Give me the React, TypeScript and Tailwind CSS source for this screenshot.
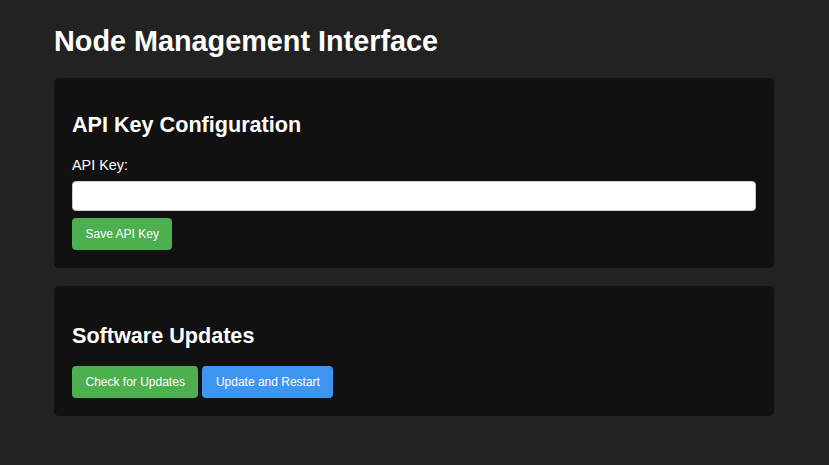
import React, { useState } from 'react';

const App: React.FC = () => {
  const [apiKey, setApiKey] = useState('');

  return (
    <div className="min-h-screen bg-[#222222] text-white font-['Liberation_Sans',Arial,sans-serif] text-[14.4px]">
      <div className="w-[720px] ml-[54px] pt-[25px] pb-[40px]">
        <h1 className="text-[28.8px] font-bold leading-[33px] mb-[20px]">Node Management Interface</h1>

        <div className="flex flex-col gap-[18px]">
          {/* API key card */}
          <section className="bg-[#111111] rounded-[5px] px-[18px] pb-[18px] pt-[34px]">
            <h2 className="text-[21.6px] font-bold leading-[25px] mb-[20px]">API Key Configuration</h2>
            <label htmlFor="apiKey" className="block leading-[17px] mb-[7px]">
              API Key:
            </label>
            <input
              id="apiKey"
              type="text"
              value={apiKey}
              onChange={e => setApiKey(e.target.value)}
              className="block w-full h-[30px] px-2 rounded-[4px] border border-[#cccccc] bg-white text-black focus:outline-none"
            />
            <div className="mt-[7px] flex">
              <button
                type="button"
                className="h-8 px-[13.5px] rounded-[4px] bg-[#4caf50] text-white text-[12px]"
              >
                Save API Key
              </button>
            </div>
          </section>

          {/* Updates card */}
          <section className="bg-[#111111] rounded-[5px] px-[18px] pb-[18px] pt-[37px]">
            <h2 className="text-[21.6px] font-bold leading-[25px] mb-[18px]">Software Updates</h2>
            <div className="flex gap-[4px]">
              <button
                type="button"
                className="h-8 px-[13.5px] rounded-[4px] bg-[#4caf50] text-white text-[12px]"
              >
                Check for Updates
              </button>
              <button
                type="button"
                className="h-8 px-[13.5px] rounded-[4px] bg-[#3e95ef] text-white text-[12px]"
              >
                Update and Restart
              </button>
            </div>
          </section>
        </div>
      </div>
    </div>
  );
};

export default App;
